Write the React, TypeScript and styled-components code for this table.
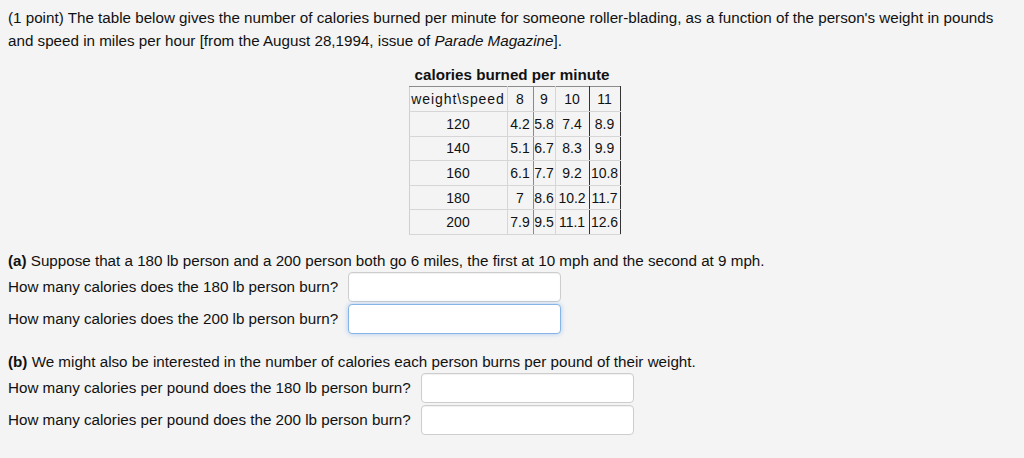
import React from "react";
import styled, { createGlobalStyle } from "styled-components";

const Global = createGlobalStyle`
  html, body { margin: 0; padding: 0; background: #f4f4f4; }
  body { font-family: "Liberation Sans", Arial, Helvetica, sans-serif; font-size: 15.2px; color: #111; }
`;

const Page = styled.div`
  padding: 6px 8px 0 8px;
  width: 1024px;
  box-sizing: border-box;
`;

const Intro = styled.p`
  margin: 0;
  line-height: 23px;
`;

const TableBlock = styled.div`
  display: flex;
  flex-direction: column;
  align-items: center;
  margin-top: 14px;
`;

const Caption = styled.div`
  font-weight: bold;
  line-height: 18px;
  margin-bottom: 2px;
`;

const Table = styled.table`
  border-collapse: collapse;
  margin-left: 5px;
  border-top: 1px solid #8c8c8c;
  border-right: 1px solid #333;
  border-bottom: 1px solid #222;
  border-left: 1px solid #cfcfcf;
`;

type Edge = "light" | "mid" | "dark";
const edgeColor: Record<Edge, string> = { light: "#d6d6d6", mid: "#8a8a8a", dark: "#333" };

const Cell = styled.td<{ $w: number; $edge: Edge; $label?: boolean; $head?: boolean }>`
  width: ${(p) => p.$w}px;
  min-width: ${(p) => p.$w}px;
  max-width: ${(p) => p.$w}px;
  box-sizing: border-box;
  padding: 0;
  height: ${(p) => (p.$head ? 25 : 24.6)}px;
  text-align: center;
  vertical-align: middle;
  white-space: nowrap;
  border-top: ${(p) => (p.$head ? "1px solid #8c8c8c" : "none")};
  border-bottom: 1px solid #d6d6d6;
  border-right: 1px solid ${(p) => edgeColor[p.$edge]};
  font-size: 14px;
  line-height: 16px;
  letter-spacing: ${(p) => (p.$label ? "0.9px" : "0")};
`;

const Para = styled.p<{ $gap: number }>`
  margin: ${(p) => p.$gap}px 0 0 0;
  line-height: 20px;
`;

const QRow = styled.div`
  display: flex;
  align-items: center;
  height: 32px;
`;

const Answer = styled.input<{ $focus?: boolean }>`
  margin-left: 10px;
  width: 213px;
  height: 30px;
  box-sizing: border-box;
  background: #fff;
  border: 1px solid ${(p) => (p.$focus ? "#86b4e6" : "#cdcdcd")};
  border-radius: 4px;
  outline: none;
  box-shadow: ${(p) => (p.$focus ? "0 0 5px rgba(82, 150, 236, 0.45)" : "inset 0 1px 1px rgba(0,0,0,0.06)")};
  font: inherit;
  padding: 0 6px;
`;

const widths = [98, 26, 22, 34, 31];
const edges: Edge[] = ["light", "mid", "light", "dark", "dark"];

const header = ["weight\\speed", "8", "9", "10", "11"];
const rows = [
  ["120", "4.2", "5.8", "7.4", "8.9"],
  ["140", "5.1", "6.7", "8.3", "9.9"],
  ["160", "6.1", "7.7", "9.2", "10.8"],
  ["180", "7", "8.6", "10.2", "11.7"],
  ["200", "7.9", "9.5", "11.1", "12.6"],
];

export default function App() {
  return (
    <Page>
      <Global />
      <Intro>
        (1 point) The table below gives the number of calories burned per minute for someone roller-blading, as a
        function of the person's weight in pounds and speed in miles per hour [from the August 28,1994, issue of{" "}
        <i>Parade Magazine</i>].
      </Intro>
      <TableBlock>
        <Caption>calories burned per minute</Caption>
        <Table>
          <tbody>
            <tr>
              {header.map((h, i) => (
                <Cell key={i} $w={widths[i]} $edge={edges[i]} $head $label={i === 0}>
                  {h}
                </Cell>
              ))}
            </tr>
            {rows.map((r, ri) => (
              <tr key={ri}>
                {r.map((c, i) => (
                  <Cell key={i} $w={widths[i]} $edge={edges[i]}>
                    {c}
                  </Cell>
                ))}
              </tr>
            ))}
          </tbody>
        </Table>
      </TableBlock>
      <Para $gap={16}>
        <b>(a)</b> Suppose that a 180 lb person and a 200 person both go 6 miles, the first at 10 mph and the second at 9
        mph.
      </Para>
      <QRow>
        How many calories does the 180 lb person burn?
        <Answer type="text" />
      </QRow>
      <QRow>
        How many calories does the 200 lb person burn?
        <Answer type="text" $focus />
      </QRow>
      <Para $gap={17}>
        <b>(b)</b> We might also be interested in the number of calories each person burns per pound of their weight.
      </Para>
      <QRow>
        How many calories per pound does the 180 lb person burn?
        <Answer type="text" />
      </QRow>
      <QRow>
        How many calories per pound does the 200 lb person burn?
        <Answer type="text" />
      </QRow>
    </Page>
  );
}
